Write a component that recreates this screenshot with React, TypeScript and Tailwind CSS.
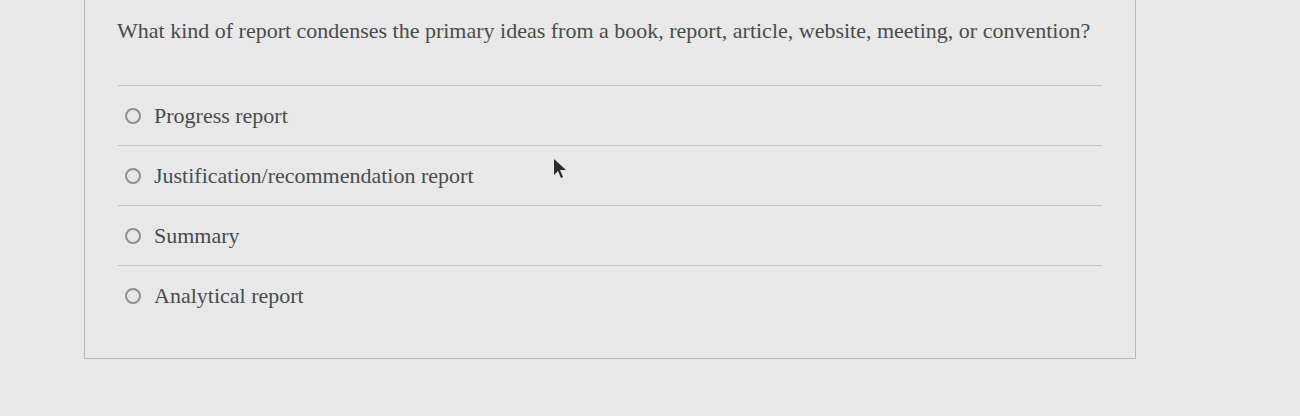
const options = [
  "Progress report",
  "Justification/recommendation report",
  "Summary",
  "Analytical report",
]

export default function App() {
  return (
    <div className="relative w-[1300px] h-[416px] overflow-hidden bg-[#e7e8e7] pl-[84px]" style={{ fontFamily: '"Liberation Serif", "Times New Roman", serif' }}>
      <div className="w-[1052px] h-[359px] border-x border-b border-[#b7bab9] px-[33px] pt-[19px]">
        <p className="text-[22px] leading-6 text-[#4a4c4c] mb-[42px] -ml-px">
          What kind of report condenses the primary ideas from a book, report, article, website, meeting, or convention?
        </p>
        {options.map((opt, i) => (
          <label key={i} className="flex items-center h-[60px] border-t border-[#c3c6c5] pl-[7px] cursor-pointer">
            <span className="w-[16px] h-[16px] rounded-full border-2 border-[#8e9190] shrink-0" />
            <span className="ml-[13px] text-[22px] text-[#4a4c4c]">{opt}</span>
          </label>
        ))}
      </div>

      {/* mouse pointer */}
      <svg className="absolute left-[552px] top-[158px]" width="16" height="22" viewBox="0 0 16 22">
        <path d="M2 1 L2 17 L6 13 L9 20 L11 19 L8 12 L14 12 Z" fill="#2b2d2e" />
      </svg>
    </div>
  )
}
